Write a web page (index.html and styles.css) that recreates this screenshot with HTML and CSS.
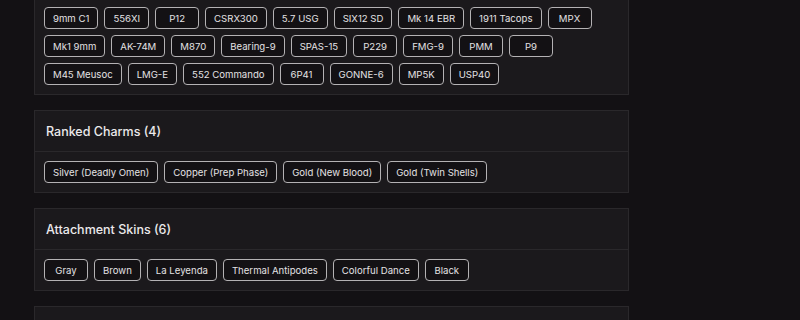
FILE: index.html
```html
<!DOCTYPE html>
<html>
<head>
  <meta charset="utf-8">
  <link rel="stylesheet" href="styles.css">
</head>
<body>
  <div class="page">
    <div class="content">

      <div class="card card-scrolled">
        <div class="tag-list">
          <span class="tag">9mm C1</span>
          <span class="tag">556XI</span>
          <span class="tag">P12</span>
          <span class="tag">CSRX300</span>
          <span class="tag">5.7 USG</span>
          <span class="tag">SIX12 SD</span>
          <span class="tag">Mk 14 EBR</span>
          <span class="tag">1911 Tacops</span>
          <span class="tag">MPX</span>
          <span class="tag">Mk1 9mm</span>
          <span class="tag">AK-74M</span>
          <span class="tag">M870</span>
          <span class="tag">Bearing-9</span>
          <span class="tag">SPAS-15</span>
          <span class="tag">P229</span>
          <span class="tag">FMG-9</span>
          <span class="tag">PMM</span>
          <span class="tag">P9</span>
          <span class="tag">M45 Meusoc</span>
          <span class="tag">LMG-E</span>
          <span class="tag">552 Commando</span>
          <span class="tag">6P41</span>
          <span class="tag">GONNE-6</span>
          <span class="tag">MP5K</span>
          <span class="tag">USP40</span>
        </div>
      </div>

      <div class="card">
        <div class="card-header">Ranked Charms (4)</div>
        <div class="tag-list">
          <span class="tag">Silver (Deadly Omen)</span>
          <span class="tag">Copper (Prep Phase)</span>
          <span class="tag">Gold (New Blood)</span>
          <span class="tag">Gold (Twin Shells)</span>
        </div>
      </div>

      <div class="card">
        <div class="card-header">Attachment Skins (6)</div>
        <div class="tag-list">
          <span class="tag">Gray</span>
          <span class="tag">Brown</span>
          <span class="tag">La Leyenda</span>
          <span class="tag">Thermal Antipodes</span>
          <span class="tag">Colorful Dance</span>
          <span class="tag">Black</span>
        </div>
      </div>

      <div class="card">
        <div class="card-header"></div>
      </div>

    </div>
  </div>
</body>
</html>
```

FILE: styles.css
```css
* {
  margin: 0;
  padding: 0;
  box-sizing: border-box;
}

body {
  width: 800px;
  height: 320px;
  overflow: hidden;
  font-family: Inter, 'Open Sans', sans-serif;
  background: #131114;
  color: #e6e4e6;
}

.page {
  padding-left: 34px;
}

/* list is shown scrolled, the first card's top edge sits above the frame */
.content {
  width: 595px;
  margin-top: -2px;
  display: flex;
  flex-direction: column;
  gap: 15px;
}

.card {
  background: #1b191c;
  border: 1px solid #2a282b;
}

.card-scrolled {
  border-top: none;
}

.card-header {
  height: 41px;
  padding: 0 11px;
  display: flex;
  align-items: center;
  font-size: 12.5px;
  font-weight: 500;
  color: #ebe9eb;
  border-bottom: 1px solid #2a282b;
}

.tag-list {
  display: flex;
  flex-wrap: wrap;
  gap: 6px;
  padding: 9px 9px;
}

.tag {
  height: 22px;
  min-width: 44px;
  padding: 0 8px;
  display: inline-flex;
  align-items: center;
  justify-content: center;
  font-size: 9.6px;
  color: #e4e2e4;
  background: #131114;
  border: 1px solid #b4b2b4;
  border-radius: 4px;
  white-space: nowrap;
}
```
